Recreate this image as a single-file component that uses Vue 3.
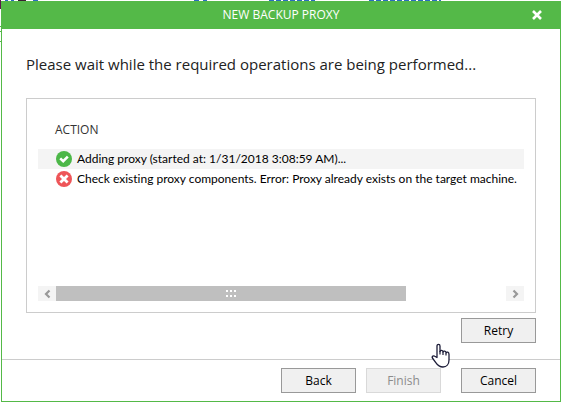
<template>
    <div class="page">
        <div class="behind"></div>
        <section class="dialog">
            <header class="title-bar">
                <h1 class="title">NEW BACKUP PROXY</h1>
                <button class="close" type="button" aria-label="Close">
                    <svg width="12" height="12" viewBox="0 0 12 12">
                        <path d="M2 2 L10 10 M10 2 L2 10" stroke="#fff" stroke-width="2.6" />
                    </svg>
                </button>
            </header>
            <main class="content">
                <h2 class="message">Please wait while the required operations are being performed...</h2>
                <div class="panel">
                    <table class="actions">
                        <thead>
                            <tr><th>ACTION</th></tr>
                        </thead>
                        <tbody>
                            <tr v-for="action in actions" :key="action.id" :class="{ selected: action.id === selectedId }">
                                <td>
                                    <div class="action">
                                        <svg class="state" width="16" height="16" viewBox="0 0 16 16">
                                            <circle cx="8" cy="8" r="8" :fill="action.ok ? '#4cb748' : '#ee5558'" />
                                            <path v-if="action.ok" d="M4.2 7.4 L7.2 10.2 L11.8 5.6" fill="none" stroke="#fff" stroke-width="2.6" />
                                            <path v-else d="M4.4 4.4 L11.6 11.6 M11.6 4.4 L4.4 11.6" stroke="#fff" stroke-width="2.8" />
                                        </svg>
                                        <span>{{ action.text }}</span>
                                    </div>
                                </td>
                            </tr>
                        </tbody>
                    </table>
                    <div class="scroll">
                        <button class="arrow" type="button" aria-label="Scroll left">
                            <svg width="8" height="10" viewBox="0 0 8 10">
                                <path d="M6.5 1.5 L3 5 L6.5 8.5" fill="none" stroke="#999" stroke-width="2.2" />
                            </svg>
                        </button>
                        <div class="track">
                            <div class="thumb">
                                <i v-for="dot in 6" :key="dot" class="dot"></i>
                            </div>
                        </div>
                        <button class="arrow" type="button" aria-label="Scroll right">
                            <svg width="8" height="10" viewBox="0 0 8 10">
                                <path d="M2.5 1.5 L6 5 L2.5 8.5" fill="none" stroke="#999" stroke-width="2.2" />
                            </svg>
                        </button>
                    </div>
                </div>
                <div class="retry-row">
                    <button class="button" type="button">Retry</button>
                    <svg class="pointer" width="20" height="26" viewBox="0 0 20 26">
                        <path d="M6 14.5 V3 C6 .8 9 .8 9 3 V8.5 C9.5 6.8 12 7 12 9 C12.6 7.6 15 7.8 15 9.8 C15.8 8.6 18 9 18 11.2 V17 C18 21.5 15.4 24 12 24 C8.4 24 6.4 22 4.8 19.6 L1.4 15 C.6 13.4 2.6 12.2 3.8 13.2 Z" fill="#fff" stroke="#1c1c38" stroke-width="1.3" stroke-linejoin="round" />
                        <path d="M9 8 V11.5 M12 9 V12 M15 10 V12.5" fill="none" stroke="#1c1c38" stroke-width="1.2" />
                    </svg>
                </div>
            </main>
            <footer class="footer">
                <button class="button" type="button">Back</button>
                <button class="button finish" type="button" disabled>Finish</button>
                <button class="button" type="button">Cancel</button>
            </footer>
        </section>
    </div>
</template>

<script setup>
import { ref } from 'vue'

let id = 0
const actions = ref([
    { id: id++, ok: true, text: 'Adding proxy (started at: 1/31/2018 3:08:59 AM)...' },
    { id: id++, ok: false, text: 'Check existing proxy components. Error: Proxy already exists on the target machine.' }
])
const selectedId = ref(0)
</script>

<style>
body {
    background: #fff;
}
</style>

<style scoped>
.page {
    font-family: "Open Sans", "Noto Sans", sans-serif;
    font-size: 12px;
    line-height: 20px;
    color: #000;
    padding-left: 1px;
    background:
        linear-gradient(#5a1a4a, #5a1a4a) 0 0 / 1px 9px no-repeat,
        linear-gradient(#54b948, #54b948) 0 26px / 1px 1px no-repeat,
        linear-gradient(#54b948, #54b948) 0 31px / 1px 1px no-repeat,
        linear-gradient(#54b948, #54b948) 0 41px / 1px 1px no-repeat;
}
/* the edge of the window that lies under the dialog */
.behind {
    height: 1px;
    background:
        linear-gradient(#2a6cc0, #2a6cc0) 4px 0 / 3px 1px no-repeat,
        linear-gradient(#2a6cc0, #2a6cc0) 10px 0 / 3px 1px no-repeat,
        linear-gradient(#3a2030, #3a2030) 17px 0 / 8px 1px no-repeat,
        linear-gradient(#2a6cc0, #2a6cc0) 32px 0 / 5px 1px no-repeat,
        linear-gradient(#2a6cc0, #2a6cc0) 193px 0 / 5px 1px no-repeat,
        linear-gradient(#2a6cc0, #2a6cc0) 202px 0 / 4px 1px no-repeat,
        repeating-linear-gradient(90deg, #2a6cc0 0, #2a6cc0 5px, #fff 5px, #fff 7px) 268px 0 / 46px 1px no-repeat,
        repeating-linear-gradient(90deg, #2a6cc0 0, #2a6cc0 5px, #fff 5px, #fff 7px) 368px 0 / 72px 1px no-repeat;
}
.dialog {
    border: 1px solid #54b948;
    border-top: 0;
    background: #fff;
}
.title-bar {
    display: grid;
    grid-template-columns: 46px 1fr 46px;
    align-items: center;
    height: 28px;
    background: #54b948;
    color: #fff;
}
.title {
    grid-column: 2;
    margin: 0;
    font-size: 12px;
    font-weight: 400;
    text-align: center;
}
.close {
    display: flex;
    justify-content: center;
    padding: 0;
    border: 0;
    background: none;
}
.content {
    padding: 23px 24px 16px;
}
.message {
    margin: 0 0 22px;
    font-size: 15px;
    line-height: 24px;
    font-weight: 400;
    color: #222;
    white-space: nowrap;
}
.panel {
    border: 1px solid #ccc;
    padding: 20px 11px 11px;
}
.actions {
    width: 100%;
    table-layout: fixed;
    border-collapse: collapse;
}
.actions th {
    padding: 1px 0 9px 17px;
    font-weight: 400;
    text-align: left;
    color: #333;
}
.actions td {
    padding: 0;
    font-family: Lato, "Open Sans", sans-serif;
    font-variant-ligatures: none;
}
.action {
    display: flex;
    align-items: center;
    gap: 5px;
    padding-left: 18px;
    white-space: nowrap;
}
.selected {
    background: #f4f4f4;
}
.state {
    flex: none;
}
.scroll {
    display: flex;
    margin-top: 97px;
    height: 15px;
}
.arrow {
    display: flex;
    align-items: center;
    justify-content: center;
    width: 18px;
    padding: 0;
    border: 0;
    background: #f4f4f4;
}
.track {
    flex: 1;
}
.thumb {
    display: grid;
    grid-template-columns: repeat(3, 2px);
    gap: 3px 2px;
    align-content: center;
    justify-content: center;
    width: calc(100% * 7 / 9);
    height: 100%;
    background: #bfbfbf;
}
.dot {
    height: 2px;
    background: #fff;
}
.retry-row {
    position: relative;
    display: flex;
    justify-content: flex-end;
    padding-top: 5px;
}
.button {
    width: 75px;
    height: 25px;
    padding: 0;
    border: 1px solid #999;
    background: #f0f0f0;
    color: #000;
    font-family: inherit;
    font-size: 12px;
}
.button:disabled {
    border-color: #d9d9d9;
    color: #8c8c8c;
}
.pointer {
    position: absolute;
    right: 85px;
    top: 30px;
}
.footer {
    display: flex;
    justify-content: flex-end;
    gap: 10px;
    padding: 8px 24px;
    border-top: 1px solid #ccc;
}
.finish {
    margin-right: 10px;
}
</style>
